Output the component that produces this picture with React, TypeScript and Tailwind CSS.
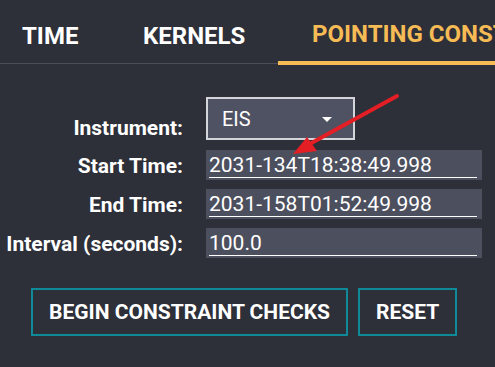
import React from 'react'

const fields = [
  { label: 'Start Time:', value: '2031-134T18:38:49.998' },
  { label: 'End Time:', value: '2031-158T01:52:49.998' },
  { label: 'Interval (seconds):', value: '100.0' },
]

const App: React.FC = () => {
  return (
    <div className="relative w-[495px] h-[367px] overflow-hidden bg-[#2d2f39] text-white font-['Roboto',sans-serif]">
      {/* Tabs */}
      <div className="flex items-start">
        <div className="w-[143px] pl-[22px] pt-[22px] pb-[13px] border-b border-[#4b4e58] text-[24px] leading-[28px] font-bold">
          TIME
        </div>
        <div className="w-[135px] pt-[22px] pb-[13px] border-b border-[#4b4e58] text-[24px] leading-[28px] font-bold">
          KERNELS
        </div>
        <div className="flex-1 min-w-0 pl-[34px] pt-[20px] pb-[13px] border-b-4 border-[#f6bb55] text-[24px] leading-[28px] font-bold text-[#f6bb55] whitespace-nowrap overflow-hidden">
          POINTING CONSTRAINTS
        </div>
      </div>

      {/* Form */}
      <div className="mt-[32px] flex flex-col gap-[9px]">
        <div className="flex items-end gap-[23px] mb-[1px]">
          <div className="w-[183px] text-right text-[21px] leading-6 font-bold">Instrument:</div>
          <div className="w-[149px] h-[43px] flex items-center justify-between pl-[14px] pr-[14px] bg-[#4f5262] border-2 border-[#d4d5da]">
            <span className="text-[20px] leading-6">EIS</span>
            <svg width="24" height="24" viewBox="0 0 24 24" className="fill-white">
              <path d="M7 10l5 5 5-5z" />
            </svg>
          </div>
        </div>
        {fields.map((f) => (
          <div key={f.label} className="flex items-start gap-[23px]">
            <div className="w-[183px] mt-[4px] text-right text-[21px] leading-6 font-bold whitespace-nowrap">{f.label}</div>
            <div className="w-[276px] h-[30px] pt-[4px] bg-[#4c4f5e]">
              <div className="ml-[3px] mr-[5px] border-b border-white text-[21px] leading-[23px] whitespace-nowrap">
                {f.value}
              </div>
            </div>
          </div>
        ))}
      </div>

      {/* Buttons */}
      <div className="mt-[30px] ml-[31px] flex gap-[10px]">
        <button className="h-[48px] px-[16px] border-2 border-[#0f8a98] text-[21px] leading-6 font-bold">
          BEGIN CONSTRAINT CHECKS
        </button>
        <button className="h-[48px] px-[16px] border-2 border-[#0f8a98] text-[21px] leading-6 font-bold">
          RESET
        </button>
      </div>

      {/* Annotation arrow */}
      <svg className="absolute left-0 top-0 pointer-events-none" width="495" height="367">
        <line x1="397" y1="96" x2="306" y2="146" stroke="#e31e24" strokeWidth="4" strokeLinecap="round" />
        <polygon points="293,154 307,137 317,151" fill="#e31e24" />
      </svg>
    </div>
  )
}

export default App
